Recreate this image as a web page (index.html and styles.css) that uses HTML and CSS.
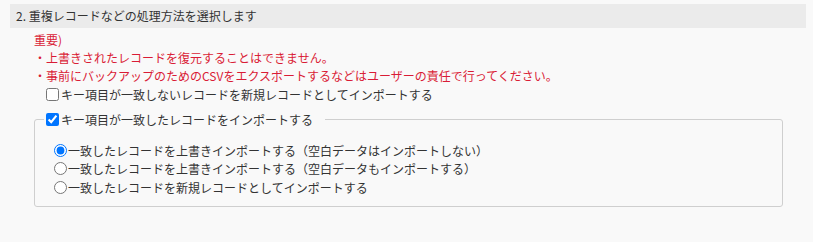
FILE: index.html
```html
<!DOCTYPE html>
<html lang="ja">
<head>
<meta charset="utf-8">
<link rel="stylesheet" href="styles.css">
</head>
<body>
<div class="page">
  <div class="section-title">2. 重複レコードなどの処理方法を選択します</div>
  <div class="section-body">
    <div class="notice">
      <div>重要)</div>
      <div>・上書きされたレコードを復元することはできません。</div>
      <div>・事前にバックアップのためのCSVをエクスポートするなどはユーザーの責任で行ってください。</div>
    </div>
    <label class="check-row"><input type="checkbox" class="ctl">キー項目が一致しないレコードを新規レコードとしてインポートする</label>
    <fieldset class="group">
      <legend class="group-legend"><label class="legend-label"><input type="checkbox" class="ctl" checked>キー項目が一致したレコードをインポートする</label></legend>
      <div class="radios">
        <label class="radio-row"><input type="radio" name="mode" class="ctl" checked>一致したレコードを上書きインポートする（空白データはインポートしない）</label>
        <label class="radio-row"><input type="radio" name="mode" class="ctl">一致したレコードを上書きインポートする（空白データもインポートする）</label>
        <label class="radio-row"><input type="radio" name="mode" class="ctl">一致したレコードを新規レコードとしてインポートする</label>
      </div>
    </fieldset>
  </div>
</div>
</body>
</html>
```
FILE: styles.css
```css
html, body {
  margin: 0;
  padding: 0;
  background: #f9f9f9;
}
body {
  font-family: "Noto Sans CJK JP", "Noto Sans", sans-serif;
  font-size: 12px;
  color: #333;
}
.page {
  padding: 4px 7px 0 10px;
}
.section-title {
  background: #ebebeb;
  height: 24px;
  line-height: 24px;
  padding-left: 6px;
  color: #333;
}
.section-body {
  padding: 3px 23px 0 24px;
}
.notice {
  color: #d91c36;
  line-height: 18px;
}
.check-row {
  display: flex;
  align-items: center;
  height: 18px;
  margin-left: 12px;
}
.ctl {
  width: 13px;
  height: 13px;
  margin: 0 2px 0 0;
  flex: none;
}
.group {
  margin: 7px 0 0 0;
  border: 1px solid #cfcfcf;
  border-radius: 3px;
  padding: 0 0 9px 0;
}
.group-legend {
  margin-left: 9px;
  padding: 0 12px 0 2px;
}
.legend-label {
  display: flex;
  align-items: center;
  height: 18px;
}
.radios {
  padding: 13px 0 0 19px;
  display: flex;
  flex-direction: column;
}
.radio-row {
  display: flex;
  align-items: center;
  height: 18.5px;
}
.radio-row .ctl {
  margin-right: 1px;
}
```
